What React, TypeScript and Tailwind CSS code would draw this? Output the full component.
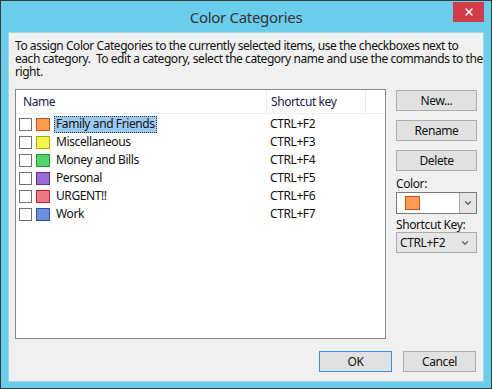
import { X, ChevronDown } from 'lucide-react';

const categories = [
  { name: 'Family and Friends', key: 'CTRL+F2', fill: 'bg-[#ff9a52]', edge: 'border-[#c8561a]', selected: true },
  { name: 'Miscellaneous', key: 'CTRL+F3', fill: 'bg-[#f5f552]', edge: 'border-[#b3a800]' },
  { name: 'Money and Bills', key: 'CTRL+F4', fill: 'bg-[#52d46a]', edge: 'border-[#1f9a36]' },
  { name: 'Personal', key: 'CTRL+F5', fill: 'bg-[#9a6bd4]', edge: 'border-[#5c2f98]' },
  { name: 'URGENT!!', key: 'CTRL+F6', fill: 'bg-[#e87c82]', edge: 'border-[#c0202c]' },
  { name: 'Work', key: 'CTRL+F7', fill: 'bg-[#6d8fe0]', edge: 'border-[#2d4f9e]' },
];

function Button({ label, primary }: { label: string; primary?: boolean }) {
  return (
    <button
      className={`w-full h-[21px] flex items-center justify-center bg-[#e1e1e1] border text-[#111] ${
        primary ? 'border-[#3c8fe8]' : 'border-[#adadad]'
      }`}
    >
      {label}
    </button>
  );
}

export default function App() {
  return (
    <div
      className="w-[492px] h-[389px] bg-[#6bcdec] border border-[#3b3b3b] flex flex-col text-[12px] tracking-[-0.4px] text-[#111]"
      style={{ fontFamily: '"Noto Sans", "Open Sans", sans-serif' }}
    >
      {/* Title bar */}
      <div className="relative h-[31px] flex items-center justify-center">
        <span className="text-[15px] tracking-[-0.3px] text-[#333] mt-[2px]">Color Categories</span>
        <div className="absolute right-[7px] top-[1px] w-[31px] h-[20px] bg-[#d13c4b] flex items-center justify-center">
          <X className="w-[12px] h-[12px] text-white" strokeWidth={3} />
        </div>
      </div>

      {/* Body */}
      <div className="flex-1 mx-[7px] mb-[6px] bg-[#f0f0f0] border border-[#a6d3e6] flex flex-col px-[6px] pt-[6px] pb-[9px]">
        <p className="leading-[13px] whitespace-nowrap tracking-[-0.45px]">
          To assign Color Categories to the currently selected items, use the checkboxes next to
          <br />
          each category.&nbsp; To edit a category, select the category name and use the commands to the
          <br />
          right.
        </p>

        <div className="flex mt-[11px] gap-[10px]">
          {/* List */}
          <div className="w-[371px] h-[250px] bg-white border border-[#828790] flex flex-col">
            <div className="flex h-[24px] border-b border-[#e8eef6] text-[#1a1a4a]">
              <div className="w-[251px] border-r border-[#e3ecf6] pl-[7px] flex items-center">Name</div>
              <div className="w-[99px] border-r border-[#e3ecf6] pl-[4px] flex items-center">Shortcut key</div>
            </div>
            <div className="pt-[1px]">
              {categories.map((c) => (
                <div key={c.name} className="flex items-center h-[18px]">
                  <div className="w-[251px] flex items-center pl-[3px]">
                    <span className="w-[13px] h-[13px] border border-[#707070] bg-white" />
                    <span className={`ml-[4px] w-[14px] h-[13px] border ${c.fill} ${c.edge}`} />
                    <span
                      className={`ml-[4px] h-[17px] flex items-center px-[2px] ${
                        c.selected ? 'bg-[#9ccbf2] outline-1 outline-dotted outline-[#333] -outline-offset-1' : ''
                      }`}
                    >
                      {c.name}
                    </span>
                  </div>
                  <div className="pl-[3px]">{c.key}</div>
                </div>
              ))}
            </div>
          </div>

          {/* Side controls */}
          <div className="w-[81px] flex flex-col pt-[1px]">
            <Button label="New..." />
            <div className="h-[9px]" />
            <Button label="Rename" />
            <div className="h-[9px]" />
            <Button label="Delete" />
            <div className="mt-[5px] leading-[15px]">Color:</div>
            <div className="mt-[1px] h-[22px] flex border border-[#7a7a7a] bg-white">
              <div className="flex-1 flex items-center pl-[8px]">
                <span className="w-[15px] h-[14px] bg-[#ff9a52] border border-[#c8561a]" />
              </div>
              <div className="w-[17px] bg-[#e5e5e5] border-l border-[#acacac] flex items-center justify-center">
                <ChevronDown className="w-[10px] h-[10px] text-[#606060]" strokeWidth={3} />
              </div>
            </div>
            <div className="mt-[3px] leading-[15px]">Shortcut Key:</div>
            <div className="h-[21px] flex items-center justify-between border border-[#acacac] bg-[#e5e5e5] pl-[3px] pr-[6px]">
              <span>CTRL+F2</span>
              <ChevronDown className="w-[10px] h-[10px] text-[#606060]" strokeWidth={3} />
            </div>
          </div>
        </div>

        <div className="flex-1" />
        <div className="flex justify-end gap-[11px] pr-[1px]">
          <div className="w-[73px]">
            <Button label="OK" primary />
          </div>
          <div className="w-[73px]">
            <Button label="Cancel" />
          </div>
        </div>
      </div>
    </div>
  );
}
